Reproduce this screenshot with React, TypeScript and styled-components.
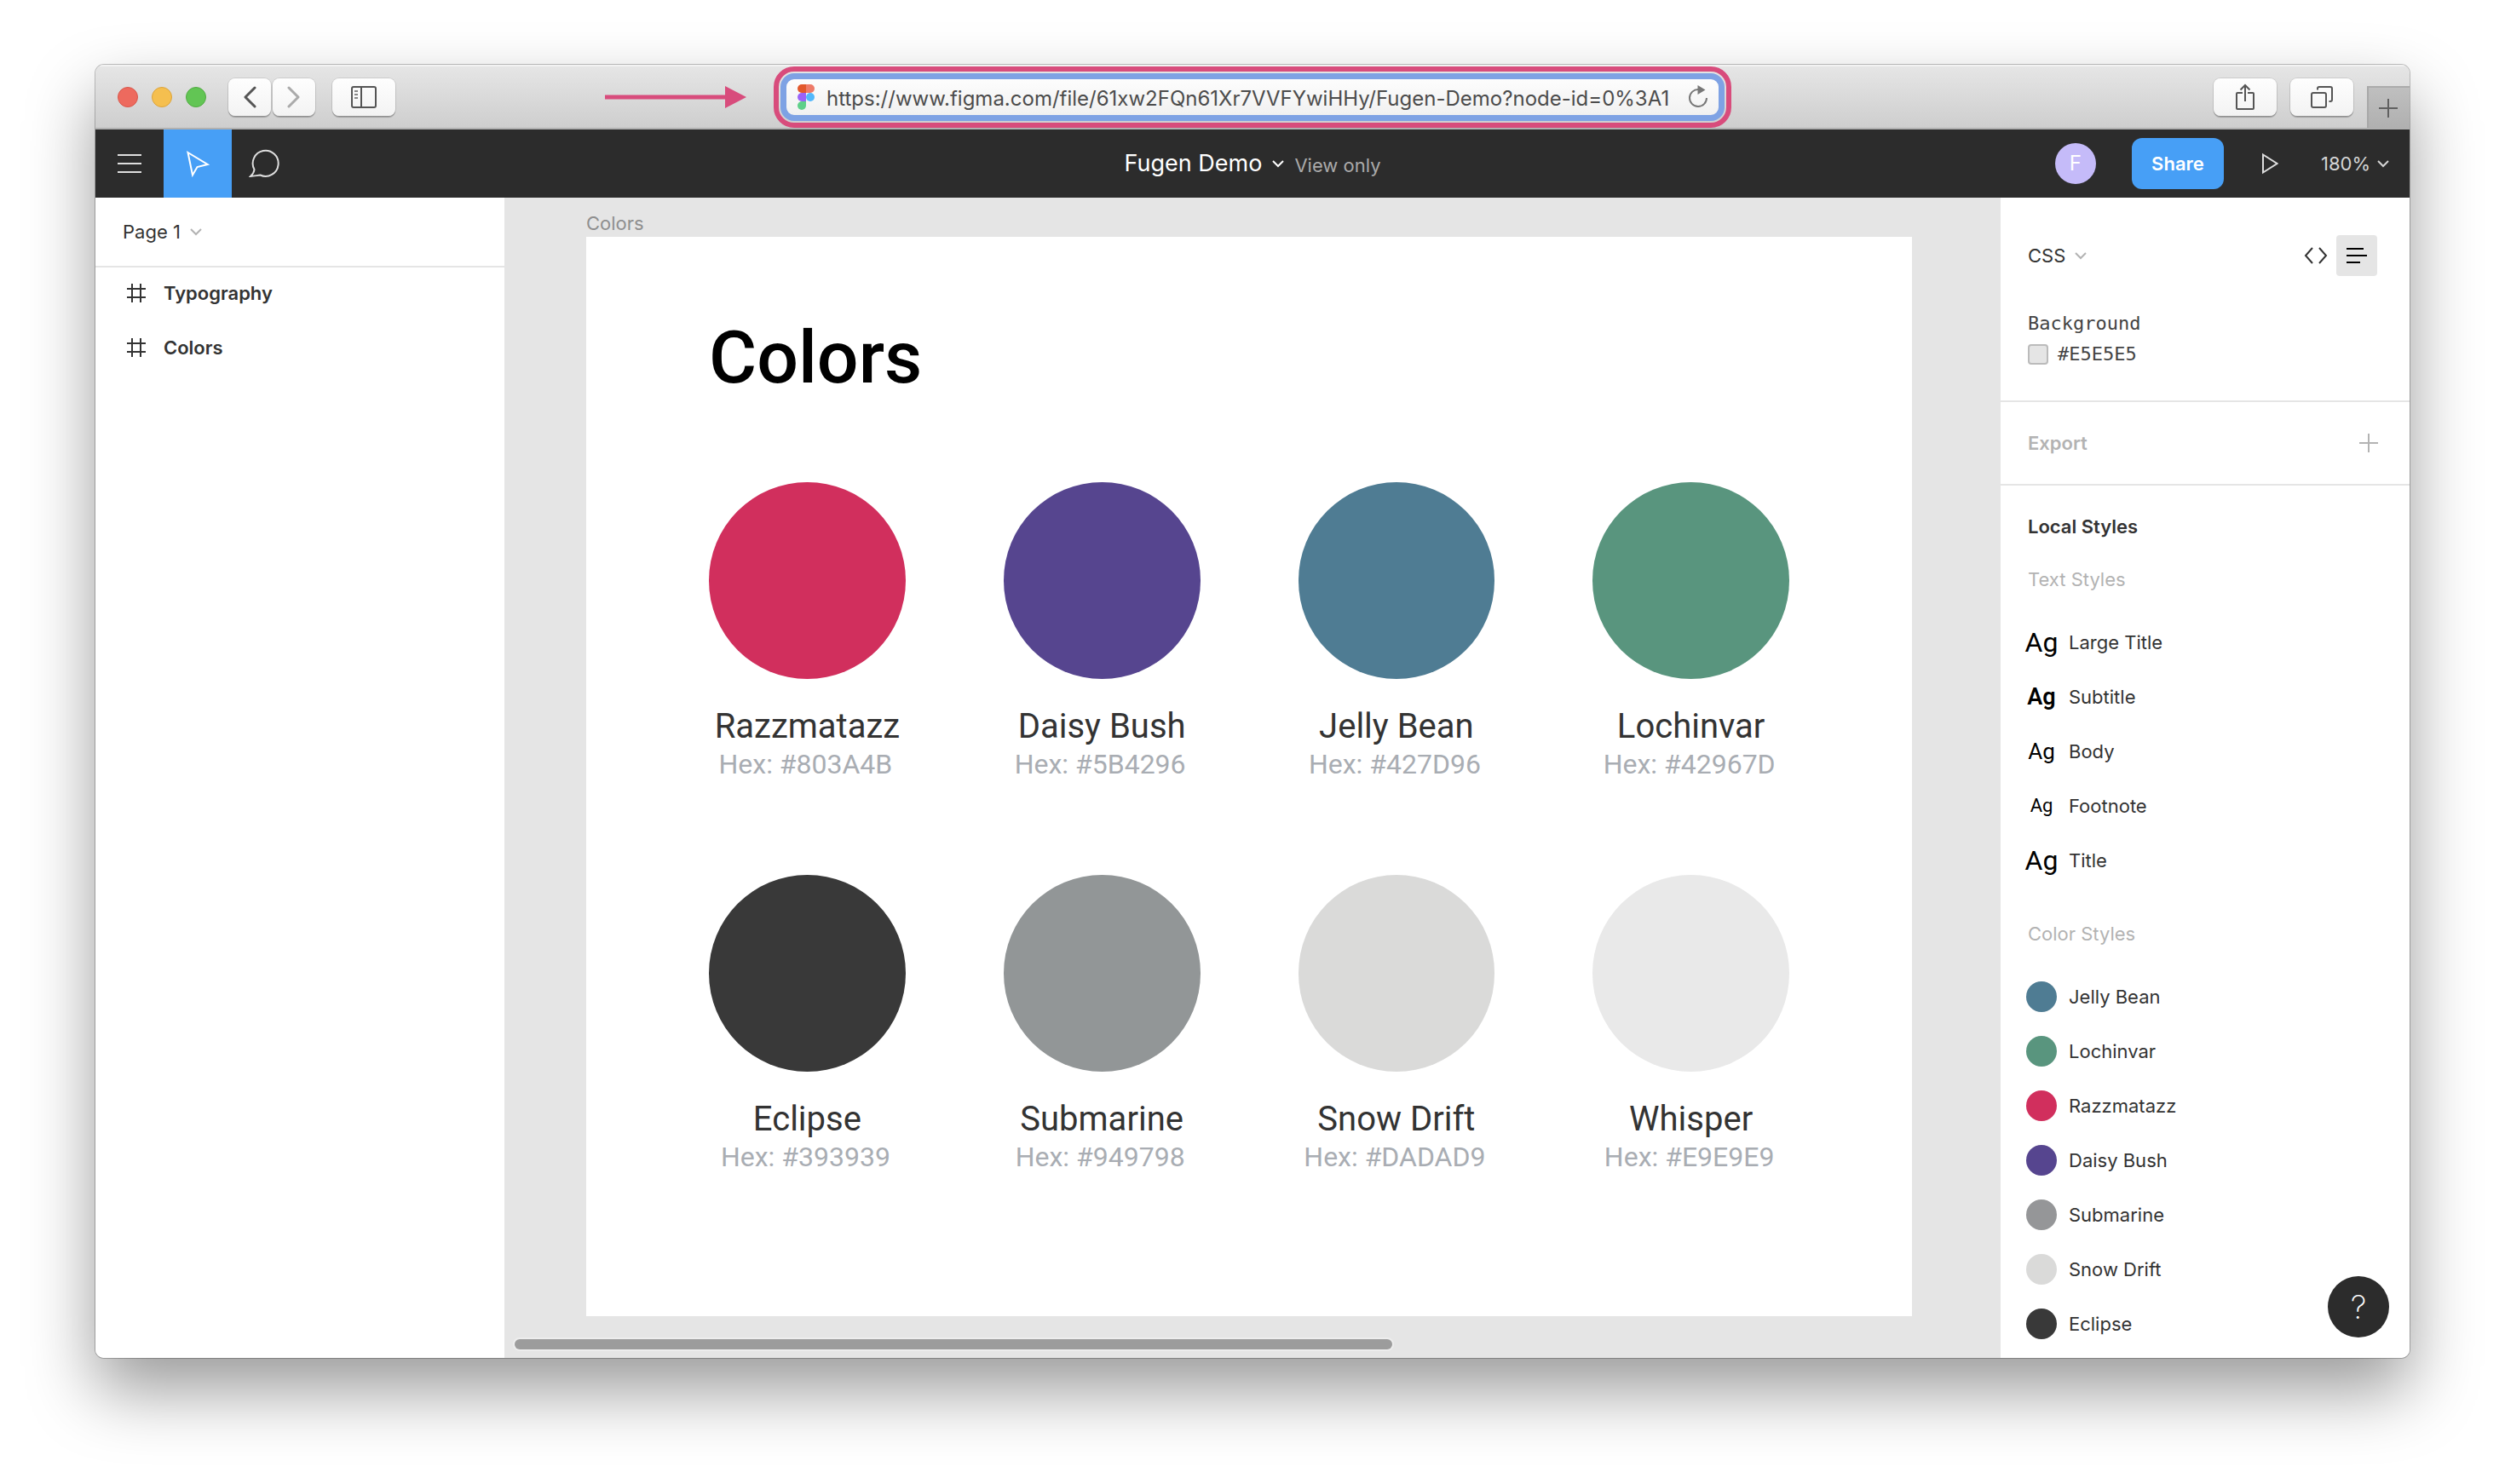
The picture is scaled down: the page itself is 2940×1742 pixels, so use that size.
import React from "react";
import styled, { createGlobalStyle } from "styled-components";

const ui = `Inter, "Liberation Sans", sans-serif`;
const doc = `Roboto, "Liberation Sans", sans-serif`;
const mono = `"DejaVu Sans Mono", "Liberation Mono", monospace`;

const GlobalStyle = createGlobalStyle`
  *, *::before, *::after { box-sizing: border-box; }
  body { margin: 0; background: #fff; font-family: ${ui}; font-size: 22px; line-height: 32px; color: #333; }
  button, input, select { font: inherit; color: inherit; margin: 0; padding: 0; border: 0; background: none; }
  ul { list-style: none; margin: 0; padding: 0; }
  h1, h2, h3, p { margin: 0; font-size: inherit; font-weight: inherit; }
  svg { display: block; flex: none; }
`;

const Desktop = styled.div`
  min-height: 100vh;
  display: flex;
  padding: 76px 112px 148px;
`;

const Window = styled.div`
  flex: 1;
  min-width: 0;
  display: flex;
  flex-direction: column;
  overflow: hidden;
  border-radius: 10px;
  background: #fff;
  box-shadow: 0 0 0 1px rgba(0, 0, 0, 0.24), 0 38px 80px rgba(0, 0, 0, 0.4);
`;

/* Browser chrome */

const TitleBar = styled.header`
  height: 76px;
  display: grid;
  grid-template-columns: 1fr minmax(0, 1124px) 1fr;
  background: linear-gradient(#e6e6e6, #cecece);
  border-bottom: 2px solid #b0b0b0;
  box-shadow: inset 0 2px 0 #f2f2f2;
`;

const ChromeLeft = styled.div`
  display: flex;
  align-items: center;
  padding: 2px 32px 0 26px;
`;

const Lights = styled.div`
  display: flex;
  gap: 16px;
  margin-right: 26px;
`;

const Light = styled.button<{ $fill: string; $edge: string }>`
  width: 24px;
  height: 24px;
  border-radius: 50%;
  background: ${(p) => p.$fill};
  border: 1px solid ${(p) => p.$edge};
`;

const NavPair = styled.div`
  display: flex;
  gap: 2px;
  margin-right: 20px;
`;

const ChromeButton = styled.button<{ $width: number }>`
  width: ${(p) => p.$width}px;
  height: 44px;
  display: flex;
  align-items: center;
  justify-content: center;
  border-radius: 8px;
  background: linear-gradient(#fefefe, #f3f3f3);
  box-shadow: 0 0 0 1px rgba(0, 0, 0, 0.09), 0 2px 1px rgba(0, 0, 0, 0.24);
  color: #555;
`;

const ArrowMark = styled.svg`
  margin-left: auto;
`;

const AddressRing = styled.div`
  height: 72px;
  margin-top: 2px;
  padding: 2px;
  border: 6px solid #d84c7c;
  border-radius: 24px;
`;

const AddressBar = styled.div`
  height: 56px;
  display: flex;
  align-items: center;
  padding: 0 12px 0 13px;
  border: 7px solid #7ea2e4;
  border-radius: 16px;
  background: linear-gradient(#fdfdfd, #f1f1f1);
`;

const AddressInput = styled.input`
  flex: 1;
  min-width: 0;
  height: 42px;
  padding: 2px 0 0 14px;
  font-size: 24px;
  color: #4c4c4c;
  outline: none;
`;

const PlainButton = styled.button`
  display: flex;
  align-items: center;
  justify-content: center;
`;

const ChromeRight = styled.div`
  display: flex;
  justify-content: flex-end;
  align-items: center;
  gap: 16px;
  padding-top: 2px;
`;

const NewTab = styled.button`
  align-self: flex-end;
  width: 50px;
  height: 49px;
  display: flex;
  align-items: center;
  justify-content: center;
  padding-right: 2px;
  background: linear-gradient(#bfbfbf, #b0b0b0);
  border-top: 2px solid #ababab;
  border-left: 2px solid #a8a8a8;
  color: #606060;
`;

/* Editor toolbar */

const Toolbar = styled.nav`
  height: 80px;
  display: grid;
  grid-template-columns: 1fr auto 1fr;
  background: #2c2c2c;
  color: #fff;
`;

const Tools = styled.div`
  display: flex;
`;

const Tool = styled.button<{ $active?: boolean }>`
  width: 80px;
  height: 80px;
  display: flex;
  align-items: center;
  justify-content: center;
  background: ${(p) => (p.$active ? "#479ff6" : "none")};
  color: ${(p) => (p.$active ? "#fff" : "#dedede")};
`;

const FileTitle = styled.div`
  display: flex;
  align-items: center;
  gap: 12px;
`;

const FileName = styled.button`
  display: flex;
  align-items: center;
  gap: 12px;
  font-size: 27px;
`;

const Access = styled.span`
  padding-top: 4px;
  color: #aaa;
`;

const Actions = styled.div`
  display: flex;
  align-items: center;
  justify-content: flex-end;
  padding-right: 24px;
`;

const Avatar = styled.button`
  width: 48px;
  height: 48px;
  margin-right: 42px;
  border-radius: 50%;
  background: #c5bbf9;
  font-size: 24px;
`;

const ShareButton = styled.button`
  width: 108px;
  height: 60px;
  margin-right: 44px;
  border-radius: 12px;
  background: #479ff6;
  font-weight: 600;
`;

const PlayButton = styled(PlainButton)`
  margin-right: 50px;
`;

const Picker = styled.span<{ $color: string; $gap: number }>`
  display: inline-flex;
  align-items: center;
  gap: ${(p) => p.$gap}px;
  color: ${(p) => p.$color};
`;

const PickerSelect = styled.select`
  appearance: none;
  field-sizing: content;
  line-height: 32px;
  outline: none;
`;

/* Panels */

const Workspace = styled.div`
  flex: 1;
  display: grid;
  grid-template-columns: 480px minmax(0, 1fr) 480px;
`;

const LayersPanel = styled.aside`
  background: #fff;
`;

const PageHeader = styled.div`
  height: 80px;
  display: flex;
  align-items: center;
  padding: 0 32px;
  box-shadow: 0 2px 0 #e5e5e5;
`;

const Layer = styled.button`
  width: 100%;
  height: 64px;
  display: flex;
  align-items: center;
  gap: 20px;
  padding-left: 36px;
  font-weight: 600;
`;

const Canvas = styled.main`
  display: flex;
  flex-direction: column;
  padding: 14px 104px 10px 96px;
  background: #e5e5e5;
`;

const FrameLabel = styled.p`
  color: #8f8f8f;
`;

const Frame = styled.section`
  flex: 1;
  padding: 90px 144px 0;
  background: #fff;
  font-family: ${doc};
`;

const FrameTitle = styled.h1`
  font-size: 86px;
  line-height: 104px;
  font-weight: 500;
  color: #000;
`;

const SwatchGrid = styled.ul`
  display: grid;
  grid-template-columns: repeat(4, 1fr);
  column-gap: 115px;
  row-gap: 110px;
  margin-top: 94px;
  text-align: center;
`;

const Swatch = styled.li`
  min-width: 0;
`;

const Disc = styled.div<{ $fill: string }>`
  aspect-ratio: 1;
  margin-bottom: 32px;
  border-radius: 50%;
  background: ${(p) => p.$fill};
`;

const SwatchName = styled.h2`
  font-size: 40px;
  line-height: 48px;
  color: #333;
`;

const SwatchHex = styled.p`
  padding-right: 4px;
  font-size: 32px;
  line-height: 40px;
  color: #a9adb3;
`;

const ScrollTrack = styled.div`
  height: 12px;
  margin: 27px 0 0 -84px;
`;

const ScrollThumb = styled.div`
  width: 1030px;
  max-width: 100%;
  height: 12px;
  border-radius: 6px;
  background: #9c9c9c;
  box-shadow: 0 0 0 2px #ededed;
`;

const Inspector = styled.aside`
  position: relative;
  background: #fff;
`;

const CodeSection = styled.section`
  height: 240px;
  padding: 44px 38px 0 32px;
  border-bottom: 2px solid #e5e5e5;
`;

const Between = styled.div`
  display: flex;
  align-items: center;
  justify-content: space-between;
`;

const ViewModes = styled.div`
  display: flex;
`;

const ViewMode = styled.button<{ $active?: boolean }>`
  width: 48px;
  height: 48px;
  display: flex;
  align-items: center;
  justify-content: center;
  border-radius: 4px;
  background: ${(p) => (p.$active ? "#e5e5e5" : "none")};
  color: ${(p) => (p.$active ? "#000" : "#333")};
`;

const CodeBlock = styled.div`
  margin-top: 38px;
  font-family: ${mono};
  line-height: 36px;
  color: #444;
`;

const CodeValue = styled.p`
  display: flex;
  align-items: center;
  gap: 11px;
`;

const Chip = styled.span`
  width: 24px;
  height: 24px;
  border: 2px solid #bbb;
  border-radius: 4px;
  background: #e5e5e5;
`;

const ExportSection = styled.section`
  height: 98px;
  padding: 0 37px 0 32px;
  display: flex;
  align-items: center;
  justify-content: space-between;
  border-bottom: 2px solid #e5e5e5;
  font-weight: 600;
  color: #b3b3b3;
`;

const StylesSection = styled.section`
  padding-top: 32px;
`;

const SectionTitle = styled.h2`
  padding-left: 32px;
  font-weight: 600;
`;

const GroupTitle = styled.h3`
  padding: 30px 0 26px 32px;
  color: #b3b3b3;
`;

const StyleList = styled.ul`
  margin-bottom: 38px;
  & + h3 { padding-top: 0; }
  &:last-child { margin-bottom: 0; }
`;

const StyleRow = styled.button`
  width: 100%;
  height: 64px;
  display: flex;
  align-items: center;
  gap: 14px;
  padding-left: 30px;
`;

const TypeSample = styled.span<{ $size: number; $weight: number }>`
  width: 36px;
  display: flex;
  justify-content: center;
  font-family: ${doc};
  font-size: ${(p) => p.$size}px;
  font-weight: ${(p) => p.$weight};
  color: #000;
`;

const ColorDot = styled.span<{ $fill: string }>`
  width: 36px;
  height: 36px;
  border-radius: 50%;
  background: ${(p) => p.$fill};
`;

const HelpButton = styled.button`
  position: absolute;
  right: 24px;
  bottom: 24px;
  width: 72px;
  height: 72px;
  border-radius: 50%;
  background: #2c2c2c;
  color: #fff;
  font-size: 38px;
  font-weight: 200;
`;

/* Icons */

const Chevron = ({ color = "currentColor" }: { color?: string }) => (
  <svg width="14" height="10" viewBox="0 0 14 10" fill="none" stroke={color} strokeWidth="2">
    <path d="M1 2l6 6 6-6" />
  </svg>
);

const NavChevron = ({ flip, color }: { flip?: boolean; color: string }) => (
  <svg width="16" height="26" viewBox="0 0 16 26" fill="none" stroke={color} strokeWidth="3" strokeLinecap="round" strokeLinejoin="round">
    <path d={flip ? "M2 2l11 11L2 24" : "M14 2L3 13l11 11"} />
  </svg>
);

const SidebarIcon = () => (
  <svg width="30" height="26" viewBox="0 0 30 26" fill="none" stroke="currentColor" strokeWidth="2">
    <rect x="1" y="1" width="28" height="24" rx="2" />
    <path d="M12 1v24" />
    <path d="M4 6h4M4 10h4M4 14h4" stroke="#888" />
  </svg>
);

const PinkArrow = () => (
  <ArrowMark width="166" height="26" viewBox="0 0 166 26" fill="#d84c7c" aria-hidden="true">
    <path d="M0 10.500h141V0l25 13-25 13V15.500H0z" />
  </ArrowMark>
);

const FigmaLogo = () => (
  <svg width="20" height="30" viewBox="0 0 20 30">
    <path d="M5 0h5v10H5A5 5 0 0 1 5 0z" fill="#e2582c" />
    <path d="M10 0h5a5 5 0 0 1 0 10h-5z" fill="#ee7b69" />
    <path d="M5 10h5v10H5a5 5 0 0 1 0-10z" fill="#9a63f8" />
    <circle cx="15" cy="15" r="5" fill="#52b8fb" />
    <path d="M5 20h5v5a5 5 0 1 1-5-5z" fill="#5fd08a" />
  </svg>
);

const ReloadIcon = () => (
  <svg width="24" height="28" viewBox="0 0 24 28" fill="none" stroke="#777" strokeWidth="2">
    <path d="M12.500 5A10 10 0 1 0 22 15" />
    <path d="M11.500 0l9 5.500-9 5.500z" fill="#777" stroke="none" />
  </svg>
);

const ShareIcon = () => (
  <svg width="24" height="32" viewBox="0 0 24 32" fill="none" stroke="currentColor" strokeWidth="2">
    <path d="M9 11H3a1 1 0 0 0-1 1v17a1 1 0 0 0 1 1h18a1 1 0 0 0 1-1V12a1 1 0 0 0-1-1h-6" />
    <path d="M12 21V2M6.500 7.500L12 2l5.500 5.500" />
  </svg>
);

const TabsIcon = () => (
  <svg width="26" height="26" viewBox="0 0 26 26" fill="none" stroke="currentColor" strokeWidth="2">
    <rect x="1" y="8" width="17" height="17" rx="2" />
    <path d="M8 4.500V3a2 2 0 0 1 2-2h13a2 2 0 0 1 2 2v13a2 2 0 0 1-2 2h-1.500" />
  </svg>
);

const PlusIcon = () => (
  <svg width="22" height="22" viewBox="0 0 22 22" fill="none" stroke="currentColor" strokeWidth="2">
    <path d="M11 0v22M0 11h22" />
  </svg>
);

const MenuIcon = () => (
  <svg width="28" height="22" viewBox="0 0 28 22" fill="none" stroke="currentColor" strokeWidth="2">
    <path d="M0 1h28M0 11h28M0 21h28" />
  </svg>
);

const CursorIcon = () => (
  <svg width="28" height="32" viewBox="0 0 28 32" fill="none" stroke="currentColor" strokeWidth="2">
    <path d="M2.500 3L25.500 17l-12 3-5.500 9.500z" />
  </svg>
);

const CommentIcon = () => (
  <svg width="40" height="34" viewBox="0 0 40 34" fill="none" stroke="currentColor" strokeWidth="2">
    <path d="M2 32c3-2.800 4.300-5.400 4.500-8A15 15 0 1 1 13.500 30.500C9.500 31 5.500 31.800 2 32z" />
  </svg>
);

const PlayIcon = () => (
  <svg width="20" height="26" viewBox="0 0 20 26" fill="none" stroke="#dedede" strokeWidth="2">
    <path d="M2 2.500v21L18.500 13z" />
  </svg>
);

const FrameIcon = () => (
  <svg width="24" height="22" viewBox="0 0 24 22" fill="none" stroke="currentColor" strokeWidth="2">
    <path d="M7 0v22M17 0v22M1 6h22M1 16h22" />
  </svg>
);

const CodeIcon = () => (
  <svg width="28" height="20" viewBox="0 0 28 20" fill="none" stroke="currentColor" strokeWidth="2">
    <path d="M10 1L2 10l8 9M18 1l8 9-8 9" />
  </svg>
);

const ListIcon = () => (
  <svg width="24" height="18" viewBox="0 0 24 18" fill="none" stroke="currentColor" strokeWidth="2">
    <path d="M0 1h20M0 9h24M0 17h16" />
  </svg>
);

/* Data */

const layers = ["Typography", "Colors"];

const swatches = [
  { name: "Razzmatazz", hex: "#803A4B", fill: "#d12f5d" },
  { name: "Daisy Bush", hex: "#5B4296", fill: "#56458f" },
  { name: "Jelly Bean", hex: "#427D96", fill: "#4f7c93" },
  { name: "Lochinvar", hex: "#42967D", fill: "#59957e" },
  { name: "Eclipse", hex: "#393939", fill: "#393939" },
  { name: "Submarine", hex: "#949798", fill: "#929697" },
  { name: "Snow Drift", hex: "#DADAD9", fill: "#dadad9" },
  { name: "Whisper", hex: "#E9E9E9", fill: "#e9e9e9" },
];

const textStyles = [
  { name: "Large Title", size: 32, weight: 400 },
  { name: "Subtitle", size: 27, weight: 600 },
  { name: "Body", size: 26, weight: 400 },
  { name: "Footnote", size: 22, weight: 400 },
  { name: "Title", size: 32, weight: 400 },
];

const colorStyles = [
  { name: "Jelly Bean", fill: "#4f7c93" },
  { name: "Lochinvar", fill: "#59957e" },
  { name: "Razzmatazz", fill: "#d12f5d" },
  { name: "Daisy Bush", fill: "#56458f" },
  { name: "Submarine", fill: "#959698" },
  { name: "Snow Drift", fill: "#dadad9" },
  { name: "Eclipse", fill: "#393939" },
];

type DropdownProps = { label: string; value: string; color?: string; chevron?: string; gap?: number };

const Dropdown = ({ label, value, color = "#333", chevron = "#b3b3b3", gap = 11 }: DropdownProps) => (
  <Picker $color={color} $gap={gap}>
    <PickerSelect aria-label={label} defaultValue={value}>
      <option>{value}</option>
    </PickerSelect>
    <Chevron color={chevron} />
  </Picker>
);

export default function App() {
  return (
    <>
      <GlobalStyle />
      <Desktop>
        <Window>
          <TitleBar>
            <ChromeLeft>
              <Lights>
                <Light aria-label="Close" $fill="#ed6a5e" $edge="#d9574b" />
                <Light aria-label="Minimize" $fill="#f5bf4f" $edge="#dca43c" />
                <Light aria-label="Zoom" $fill="#62c554" $edge="#51ab42" />
              </Lights>
              <NavPair>
                <ChromeButton $width={50} aria-label="Back">
                  <NavChevron color="#555" />
                </ChromeButton>
                <ChromeButton $width={50} aria-label="Forward">
                  <NavChevron flip color="#aaa" />
                </ChromeButton>
              </NavPair>
              <ChromeButton $width={74} aria-label="Show sidebar">
                <SidebarIcon />
              </ChromeButton>
              <PinkArrow />
            </ChromeLeft>
            <AddressRing>
              <AddressBar>
                <FigmaLogo />
                <AddressInput
                  aria-label="Address"
                  defaultValue="https://www.figma.com/file/61xw2FQn61Xr7VVFYwiHHy/Fugen-Demo?node-id=0%3A1"
                />
                <PlainButton aria-label="Reload">
                  <ReloadIcon />
                </PlainButton>
              </AddressBar>
            </AddressRing>
            <ChromeRight>
              <ChromeButton $width={74} aria-label="Share page">
                <ShareIcon />
              </ChromeButton>
              <ChromeButton $width={74} aria-label="Show tabs">
                <TabsIcon />
              </ChromeButton>
              <NewTab aria-label="New tab">
                <PlusIcon />
              </NewTab>
            </ChromeRight>
          </TitleBar>

          <Toolbar>
            <Tools>
              <Tool aria-label="Menu">
                <MenuIcon />
              </Tool>
              <Tool $active aria-label="Move">
                <CursorIcon />
              </Tool>
              <Tool aria-label="Comment">
                <CommentIcon />
              </Tool>
            </Tools>
            <FileTitle>
              <FileName>
                Fugen Demo
                <Chevron />
              </FileName>
              <Access>View only</Access>
            </FileTitle>
            <Actions>
              <Avatar>F</Avatar>
              <ShareButton>Share</ShareButton>
              <PlayButton aria-label="Present">
                <PlayIcon />
              </PlayButton>
              <Dropdown label="Zoom level" value="180%" color="#d5d5d5" chevron="#d5d5d5" gap={8} />
            </Actions>
          </Toolbar>

          <Workspace>
            <LayersPanel>
              <PageHeader>
                <Dropdown label="Page" value="Page 1" />
              </PageHeader>
              <ul>
                {layers.map((name) => (
                  <li key={name}>
                    <Layer>
                      <FrameIcon />
                      {name}
                    </Layer>
                  </li>
                ))}
              </ul>
            </LayersPanel>

            <Canvas>
              <FrameLabel>Colors</FrameLabel>
              <Frame>
                <FrameTitle>Colors</FrameTitle>
                <SwatchGrid>
                  {swatches.map((s) => (
                    <Swatch key={s.name}>
                      <Disc $fill={s.fill} />
                      <SwatchName>{s.name}</SwatchName>
                      <SwatchHex>Hex: {s.hex}</SwatchHex>
                    </Swatch>
                  ))}
                </SwatchGrid>
              </Frame>
              <ScrollTrack>
                <ScrollThumb />
              </ScrollTrack>
            </Canvas>

            <Inspector>
              <CodeSection>
                <Between>
                  <Dropdown label="Code language" value="CSS" />
                  <ViewModes>
                    <ViewMode aria-label="Code view">
                      <CodeIcon />
                    </ViewMode>
                    <ViewMode $active aria-label="List view">
                      <ListIcon />
                    </ViewMode>
                  </ViewModes>
                </Between>
                <CodeBlock>
                  <p>Background</p>
                  <CodeValue>
                    <Chip />
                    #E5E5E5
                  </CodeValue>
                </CodeBlock>
              </CodeSection>
              <ExportSection>
                <h2>Export</h2>
                <PlainButton aria-label="Add export">
                  <PlusIcon />
                </PlainButton>
              </ExportSection>
              <StylesSection>
                <SectionTitle>Local Styles</SectionTitle>
                <GroupTitle>Text Styles</GroupTitle>
                <StyleList>
                  {textStyles.map((t) => (
                    <li key={t.name}>
                      <StyleRow>
                        <TypeSample $size={t.size} $weight={t.weight}>
                          Ag
                        </TypeSample>
                        {t.name}
                      </StyleRow>
                    </li>
                  ))}
                </StyleList>
                <GroupTitle>Color Styles</GroupTitle>
                <StyleList>
                  {colorStyles.map((c) => (
                    <li key={c.name}>
                      <StyleRow>
                        <ColorDot $fill={c.fill} />
                        {c.name}
                      </StyleRow>
                    </li>
                  ))}
                </StyleList>
              </StylesSection>
              <HelpButton aria-label="Help">?</HelpButton>
            </Inspector>
          </Workspace>
        </Window>
      </Desktop>
    </>
  );
}
